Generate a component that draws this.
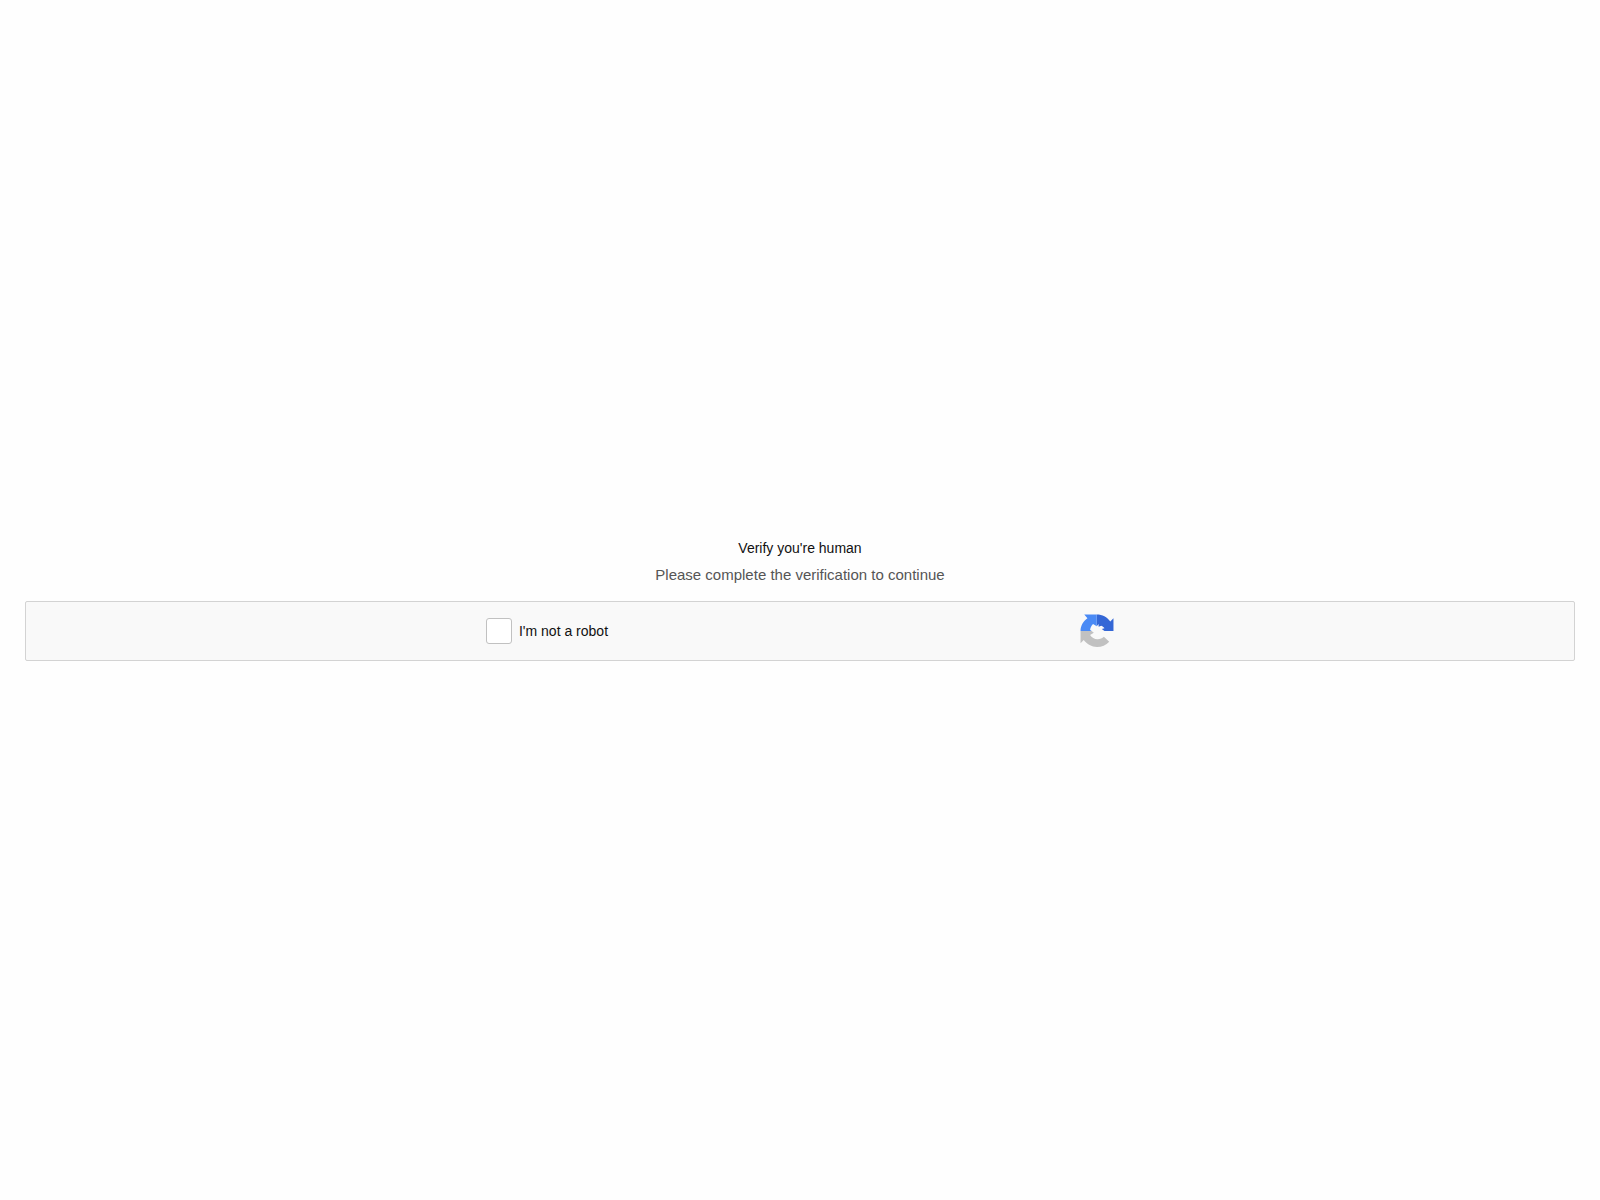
<script lang="ts">
    let checked = false
</script>

<main class="verify">
    <h1>Verify you're human</h1>
    <p>Please complete the verification to continue</p>
    <div class="captcha">
        <label class="check">
            <input type="checkbox" bind:checked />
            <span>I'm not a robot</span>
        </label>
        <svg class="logo" viewBox="0 0 64 64" aria-hidden="true">
            <path fill="#3467d6" d="M63 32V8l-6 6C51 6 42 1 31.500 1v22l3.500-4v5l5-2c3 1 5 3 6 5l-5 1 5 4z" />
            <path fill="#4a8af5" d="M31.500 1H8l6 7C6 14 1 22 1 32h21l-3-2c.5-4 2.500-8 5.500-11l7 4z" />
            <path fill="#c1c1c1" d="M1 32v23l6-6c6 8 15 13 25 13 9 0 17-3.500 23-10L45 43c-3 3-7 4.500-12 4.500-6 0-11-3-14-8l7-4-4-3.500z" />
        </svg>
    </div>
</main>

<style>
    :global(body) {
        background: #fefefe;
    }
    .verify {
        box-sizing: border-box;
        min-height: 100vh;
        padding: 0 25px 2px;
        display: flex;
        flex-direction: column;
        justify-content: center;
        font-family: "Liberation Sans", Arial, sans-serif;
        font-size: 14px;
        line-height: 20px;
        color: #111;
        text-align: center;
    }
    h1 {
        margin: 0 0 7px;
        font-size: 14px;
        font-weight: 400;
    }
    p {
        margin: 0 0 16px;
        font-size: 15px;
        color: #555;
    }
    .captcha {
        box-sizing: border-box;
        height: 60px;
        display: flex;
        align-items: center;
        justify-content: space-evenly;
        background: #f9f9f9;
        border: 1px solid #d3d3d3;
        border-radius: 2px;
    }
    .check {
        display: flex;
        align-items: center;
        gap: 7px;
        margin-right: 6px;
        cursor: pointer;
    }
    .check input {
        appearance: none;
        box-sizing: border-box;
        width: 26px;
        height: 26px;
        margin: 0;
        background: #fff;
        border: 1px solid #c1c1c1;
        border-radius: 3px;
        cursor: pointer;
    }
    .check input:checked {
        background: #4a8af5;
    }
    .logo {
        width: 34px;
        height: 34px;
        margin-left: 6px;
    }
</style>
